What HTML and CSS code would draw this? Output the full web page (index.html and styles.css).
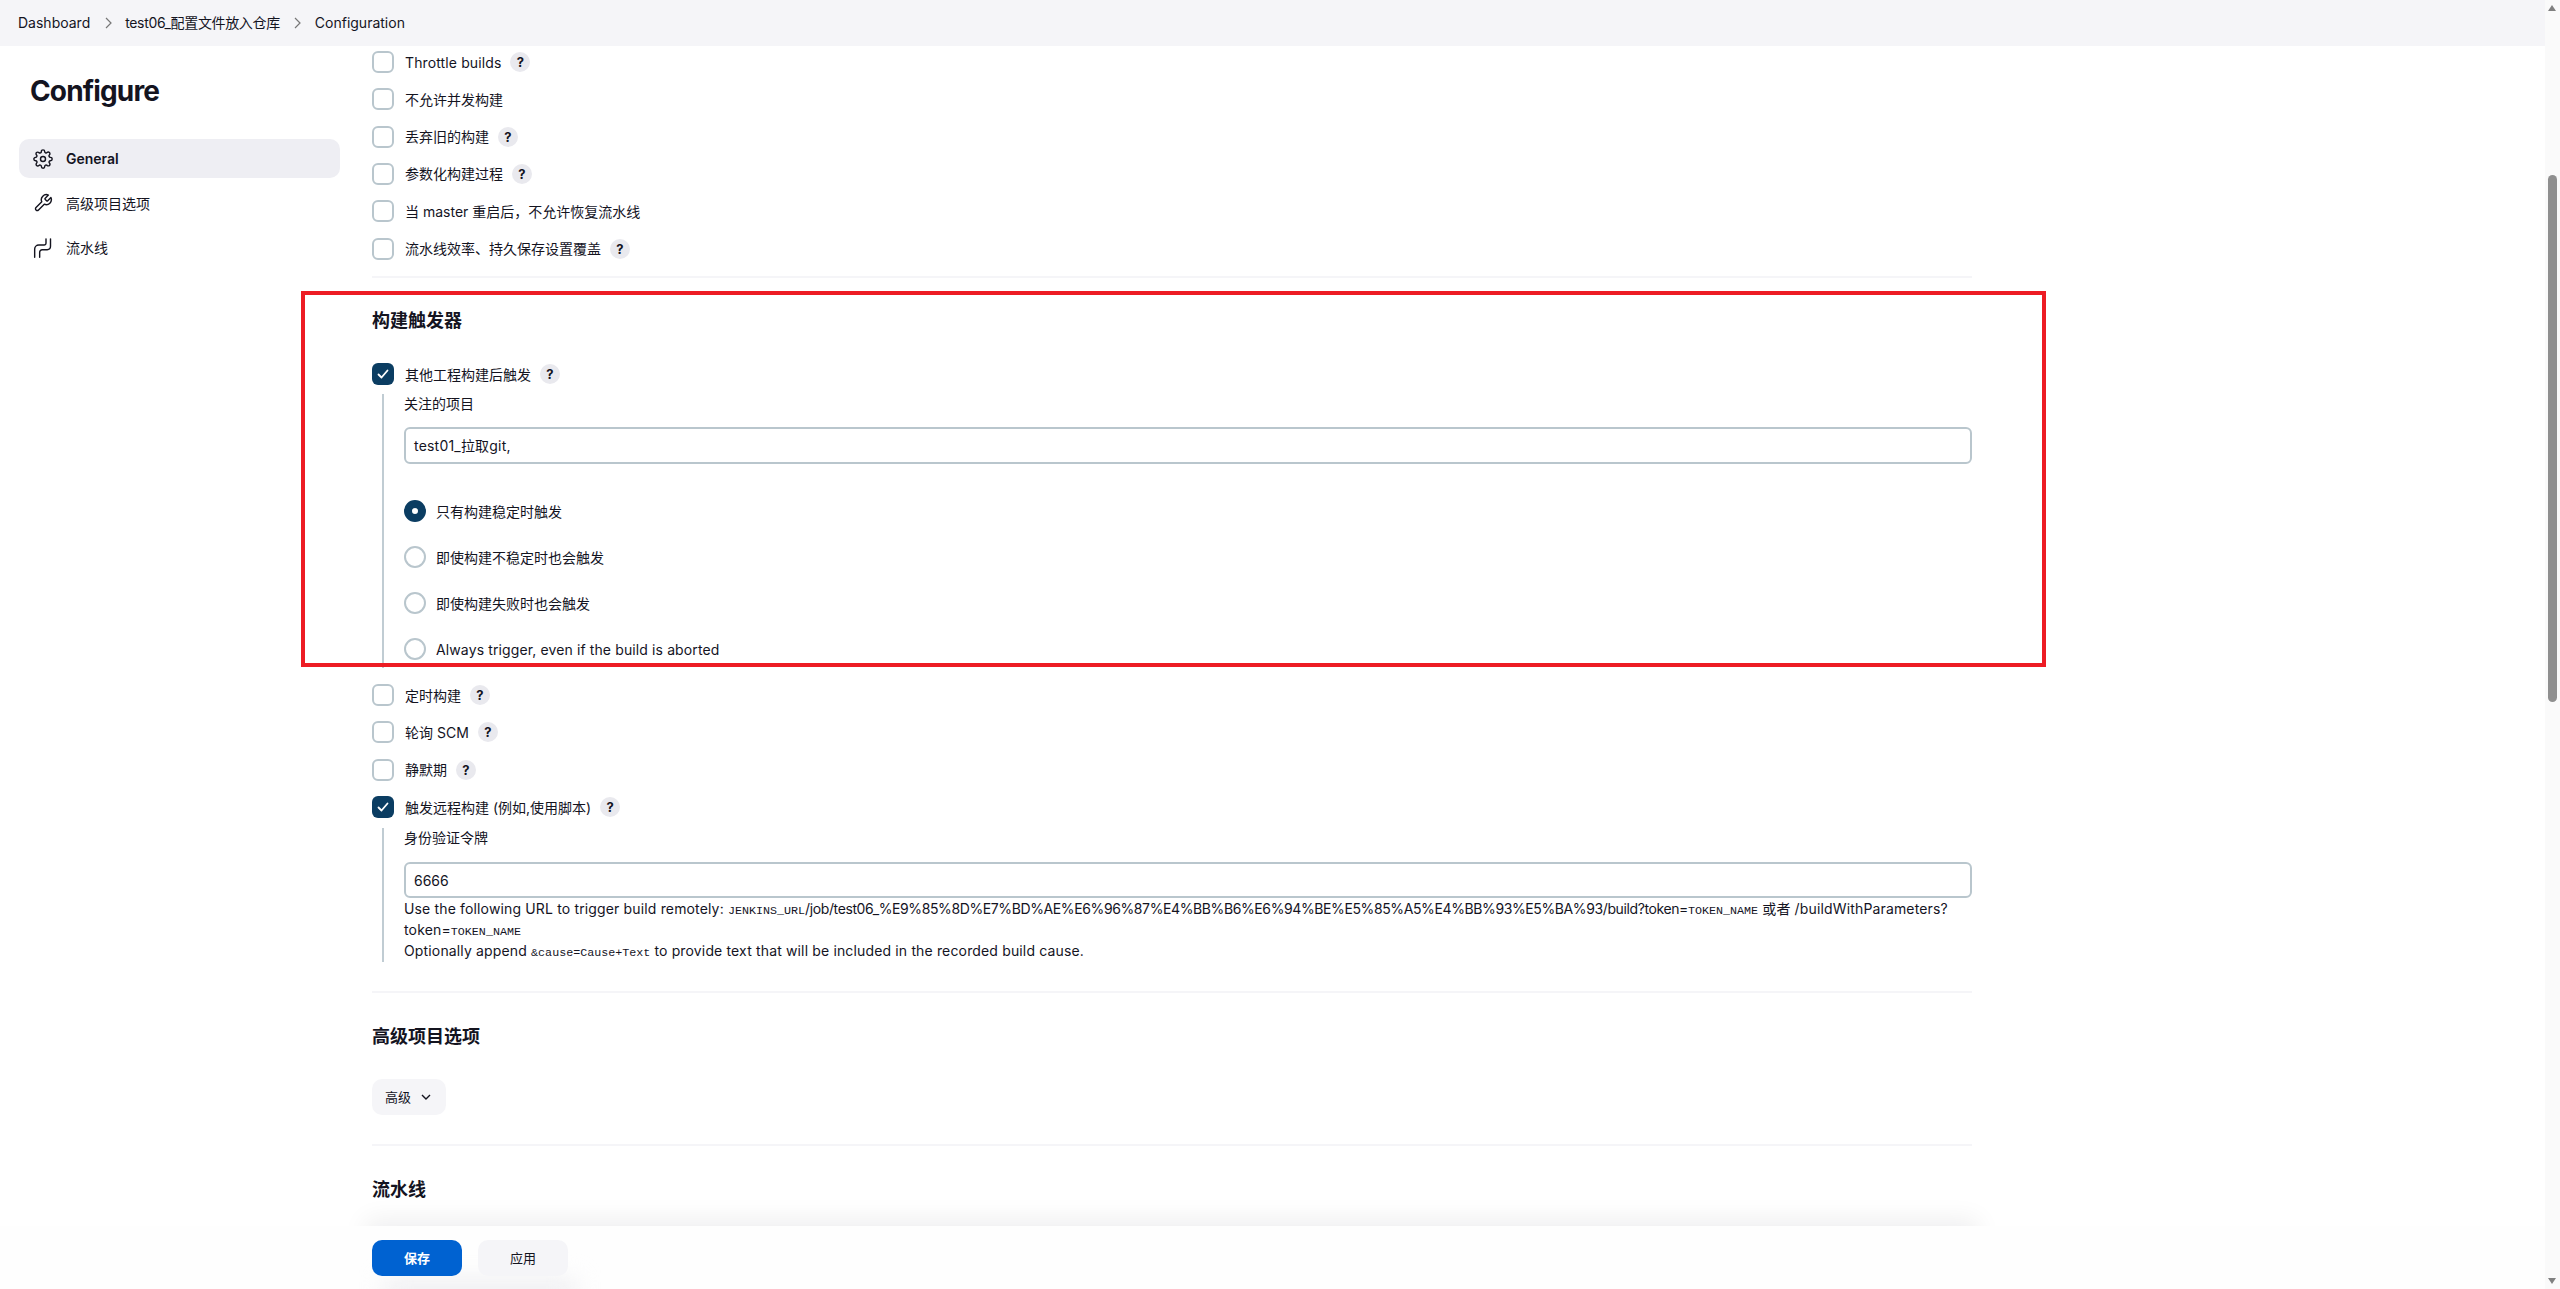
FILE: index.html
```html
<!DOCTYPE html>
<html lang="zh-CN">
<head>
<meta charset="utf-8">
<title>Configuration</title>
<link rel="stylesheet" href="styles.css">
</head>
<body>
<header class="crumbs">
  <a class="crumb">Dashboard</a>
  <svg class="sep" viewBox="0 0 10 14"><path d="M3 2l5 5-5 5"/></svg>
  <a class="crumb crumb-tight">test06_配置文件放入仓库</a>
  <svg class="sep" viewBox="0 0 10 14"><path d="M3 2l5 5-5 5"/></svg>
  <a class="crumb">Configuration</a>
</header>
<div class="layout">
  <aside class="side">
    <h1 class="title">Configure</h1>
    <nav class="nav">
      <a class="nav-item active">
        <svg class="nav-icon" viewBox="0 0 24 24"><circle cx="12" cy="12" r="3"/><path d="M19.4 15a1.65 1.65 0 0 0 .33 1.82l.06.06a2 2 0 0 1 0 2.83 2 2 0 0 1-2.83 0l-.06-.06a1.65 1.65 0 0 0-1.82-.33 1.65 1.65 0 0 0-1 1.51V21a2 2 0 0 1-2 2 2 2 0 0 1-2-2v-.09A1.65 1.65 0 0 0 9 19.4a1.65 1.65 0 0 0-1.82.33l-.06.06a2 2 0 0 1-2.83 0 2 2 0 0 1 0-2.83l.06-.06a1.65 1.65 0 0 0 .33-1.82 1.65 1.65 0 0 0-1.51-1H3a2 2 0 0 1-2-2 2 2 0 0 1 2-2h.09A1.65 1.65 0 0 0 4.6 9a1.65 1.65 0 0 0-.33-1.82l-.06-.06a2 2 0 0 1 0-2.83 2 2 0 0 1 2.83 0l.06.06a1.65 1.65 0 0 0 1.82.33H9a1.65 1.65 0 0 0 1-1.51V3a2 2 0 0 1 2-2 2 2 0 0 1 2 2v.09a1.65 1.65 0 0 0 1 1.51 1.65 1.65 0 0 0 1.82-.33l.06-.06a2 2 0 0 1 2.83 0 2 2 0 0 1 0 2.83l-.06.06a1.65 1.65 0 0 0-.33 1.82V9a1.65 1.65 0 0 0 1.51 1H21a2 2 0 0 1 2 2 2 2 0 0 1-2 2h-.09a1.65 1.65 0 0 0-1.51 1z"/></svg>
        General
      </a>
      <a class="nav-item">
        <svg class="nav-icon" viewBox="0 0 24 24"><path d="M14.7 6.3a1 1 0 0 0 0 1.4l1.6 1.6a1 1 0 0 0 1.4 0l3.77-3.77a6 6 0 0 1-7.94 7.94l-6.91 6.91a2.12 2.12 0 0 1-3-3l6.91-6.91a6 6 0 0 1 7.94-7.94l-3.76 3.76z"/></svg>
        高级项目选项
      </a>
      <a class="nav-item">
        <svg class="nav-icon" viewBox="0 0 24 24"><path d="M15.6 1v5.4a2 2 0 0 1-2 2H7a5 5 0 0 0-5 5V23"/><path d="M21 1v9a4 4 0 0 1-4 4h-6a3 3 0 0 0-3 3v6"/></svg>
        流水线
      </a>
    </nav>
  </aside>
  <main class="content">
    <div class="opts">
      <div class="row"><span class="box"></span><span class="latin">Throttle builds</span><span class="help">?</span></div>
      <div class="row"><span class="box"></span><span>不允许并发构建</span></div>
      <div class="row"><span class="box"></span><span>丢弃旧的构建</span><span class="help">?</span></div>
      <div class="row"><span class="box"></span><span>参数化构建过程</span><span class="help">?</span></div>
      <div class="row"><span class="box"></span><span>当 master 重启后，不允许恢复流水线</span></div>
      <div class="row"><span class="box"></span><span>流水线效率、持久保存设置覆盖</span><span class="help">?</span></div>
    </div>
    <hr class="rule rule-first">
    <h2 class="heading heading-triggers">构建触发器</h2>
    <div class="row"><span class="box on"><svg viewBox="0 0 22 22"><path d="M6.5 11.5l3 3 6-7"/></svg></span><span>其他工程构建后触发</span><span class="help">?</span></div>
    <div class="nested nested-a">
      <label class="field-label">关注的项目</label>
      <div class="input">test01_拉取git,</div>
      <div class="radios">
        <div class="radio-row"><span class="radio on"></span><span>只有构建稳定时触发</span></div>
        <div class="radio-row"><span class="radio"></span><span>即使构建不稳定时也会触发</span></div>
        <div class="radio-row"><span class="radio"></span><span>即使构建失败时也会触发</span></div>
        <div class="radio-row"><span class="radio"></span><span class="latin">Always trigger, even if the build is aborted</span></div>
      </div>
    </div>
    <div class="opts opts-second">
      <div class="row"><span class="box"></span><span>定时构建</span><span class="help">?</span></div>
      <div class="row"><span class="box"></span><span>轮询 SCM</span><span class="help">?</span></div>
      <div class="row"><span class="box"></span><span>静默期</span><span class="help">?</span></div>
      <div class="row"><span class="box on"><svg viewBox="0 0 22 22"><path d="M6.5 11.5l3 3 6-7"/></svg></span><span>触发远程构建 (例如,使用脚本)</span><span class="help">?</span></div>
    </div>
    <div class="nested nested-b">
      <label class="field-label">身份验证令牌</label>
      <div class="input">6666</div>
      <div class="hint">Use the following URL to trigger build remotely: <code>JENKINS_URL</code><span class="url">/job/test06_%E9%85%8D%E7%BD%AE%E6%96%87%E4%BB%B6%E6%94%BE%E5%85%A5%E4%BB%93%E5%BA%93/build?token=</span><code>TOKEN_NAME</code> 或者 /buildWithParameters?<br>token=<code>TOKEN_NAME</code><br>Optionally append <code>&amp;cause=Cause+Text</code> to provide text that will be included in the recorded build cause.</div>
    </div>
    <hr class="rule rule-second">
    <h2 class="heading heading-adv">高级项目选项</h2>
    <button class="adv-btn">高级<svg viewBox="0 0 12 12"><path d="M2 4l4 4 4-4"/></svg></button>
    <hr class="rule rule-third">
    <h2 class="heading heading-pipe">流水线</h2>
  </main>
</div>
<div class="appbar">
  <button class="btn save">保存</button>
  <button class="btn apply">应用</button>
</div>
<div class="highlight"></div>
<div class="scrollbar">
  <span class="arrow up"></span>
  <span class="thumb"></span>
  <span class="arrow down"></span>
</div>
</body>
</html>
```
FILE: styles.css
```css
* { box-sizing: border-box; }
html, body { margin: 0; height: 100%; }
body {
  position: relative;
  height: 1289px;
  overflow: hidden;
  background: #fff;
  color: #14141f;
  font: 14px/21px Inter, "Noto Sans CJK SC", sans-serif;
}
.crumbs {
  display: flex;
  align-items: center;
  height: 46px;
  padding-left: 18px;
  padding-right: 15px;
  padding-bottom: 1px;
  background: #f5f5f8;
  color: #14141f;
}
.crumb-tight { letter-spacing: -0.35px; }
.sep { width: 10px; height: 14px; margin: 0 12.5px; }
.sep path { fill: none; stroke: #777; stroke-width: 1.2; }
.layout { display: flex; }
.side { width: 372px; flex: none; padding: 0 32px 0 19px; }
.title { margin: 27px 0 0 11px; font-size: 28px; line-height: 36px; font-weight: 700; letter-spacing: -0.85px; }
.nav { margin-top: 30px; display: flex; flex-direction: column; gap: 5.5px; }
.nav-item {
  display: flex;
  align-items: center;
  gap: 13px;
  height: 39px;
  padding-left: 14px;
  border-radius: 10px;
}
.nav-item.active { background: #eeeef3; font-weight: 600; }
.nav-icon {
  width: 20px;
  height: 20px;
  flex: none;
  fill: none;
  stroke: #14141f;
  stroke-width: 1.7;
  stroke-linecap: round;
  stroke-linejoin: round;
}
.content { width: 1600px; padding-top: 5px; }
.opts { display: flex; flex-direction: column; gap: 15.33px; }
.row { display: flex; align-items: center; height: 22px; }
.latin { letter-spacing: 0.12px; }
.box {
  width: 22px;
  height: 22px;
  flex: none;
  margin-right: 11px;
  border: 2px solid #b9c6cd;
  border-radius: 6px;
  background: #fff;
}
.box.on { border: 0; background: #0b3d62; }
.box svg { display: block; width: 22px; height: 22px; }
.box svg path { fill: none; stroke: #fff; stroke-width: 1.8; stroke-linecap: round; stroke-linejoin: round; }
.help {
  width: 20px;
  height: 20px;
  margin-left: 9px;
  border-radius: 50%;
  background: #e9e9ee;
  font-size: 13px;
  font-weight: 700;
  line-height: 20px;
  text-align: center;
}
.rule { height: 2px; margin: 0; border: 0; background: #f5f5f8; }
.rule-first { margin-top: 16px; }
.heading { margin: 0; font-size: 18px; line-height: 24px; font-weight: 700; }
.heading-triggers { margin-top: 31.5px; margin-bottom: 30px; }
.nested { margin-left: 10px; padding-left: 20px; border-left: 2px solid #c0ccd3; }
.nested-a { margin-top: 9px; height: 274px; }
.field-label { display: block; line-height: 20px; }
.input {
  display: flex;
  align-items: center;
  height: 37px;
  padding-left: 8px;
  border: 2px solid #b9c6cd;
  border-radius: 6px;
}
.nested-a .input { margin-top: 13px; letter-spacing: 0.2px; }
.radios { display: flex; flex-direction: column; gap: 24px; margin-top: 36px; }
.radio-row { display: flex; align-items: center; height: 22px; }
.radio {
  width: 22px;
  height: 22px;
  margin-right: 10px;
  flex: none;
  border: 2px solid #b9c6cd;
  border-radius: 50%;
}
.radio.on { border: 8px solid #0b3d62; }
.opts-second { margin-top: 16px; }
.nested-b { margin-top: 10px; height: 134px; }
.nested-b .input { margin-top: 14px; height: 36px; }
.hint { letter-spacing: 0.15px; }
.url { letter-spacing: -0.39px; }
code { font: 11.7px/0 "Liberation Mono", "Noto Sans CJK SC", monospace; letter-spacing: 0; }
.rule-second { margin-top: 29px; }
.heading-adv { margin-top: 32px; }
.adv-btn {
  display: flex;
  align-items: center;
  gap: 9px;
  height: 36px;
  margin-top: 30px;
  padding: 0 14px 0 13px;
  border: 0;
  border-radius: 10px;
  background: #f5f5f8;
  color: #14141f;
  font: inherit;
  font-size: 13px;
}
.adv-btn svg { width: 12px; height: 12px; fill: none; stroke: #14141f; stroke-width: 1.4; }
.rule-third { margin-top: 29px; }
.heading-pipe { margin-top: 32px; }
.appbar {
  position: absolute;
  left: 0;
  right: 15px;
  bottom: 0;
  height: 63px;
  display: flex;
  align-items: center;
  gap: 16px;
  padding: 1px 0 0 372px;
  background: #fefefe;
}
.appbar::before {
  content: "";
  position: absolute;
  left: 372px;
  top: 0;
  width: 1600px;
  height: 63px;
  box-shadow: 0 0 26px 6px rgba(20, 20, 31, 0.07);
  clip-path: inset(-45px -45px 100% -45px);
}
.appbar::after {
  content: "";
  position: absolute;
  left: 385px;
  bottom: -14px;
  width: 190px;
  height: 22px;
  background: #ececef;
  filter: blur(12px);
}
.btn {
  position: relative;
  z-index: 1;
  width: 90px;
  height: 36px;
  border: 0;
  border-radius: 10px;
  font: inherit;
  font-size: 13px;
}
.save { background: #0062d1; color: #fff; font-weight: 700; }
.apply { background: #f5f5f8; color: #14141f; }
.highlight {
  position: absolute;
  left: 301px;
  top: 291px;
  width: 1745px;
  height: 376px;
  border: 4px solid #ed1c24;
}
.scrollbar {
  position: absolute;
  top: 0;
  right: 0;
  width: 15px;
  height: 1289px;
  background: #fafafa;
}
.thumb {
  position: absolute;
  top: 175px;
  left: 3px;
  width: 9px;
  height: 527px;
  border-radius: 5px;
  background: #8f8f8f;
}
.arrow {
  position: absolute;
  left: 3px;
  width: 0;
  height: 0;
  border-left: 4.5px solid transparent;
  border-right: 4.5px solid transparent;
}
.arrow.up { top: 5px; border-bottom: 6px solid #808080; }
.arrow.down { bottom: 5px; border-top: 6px solid #808080; }
```
